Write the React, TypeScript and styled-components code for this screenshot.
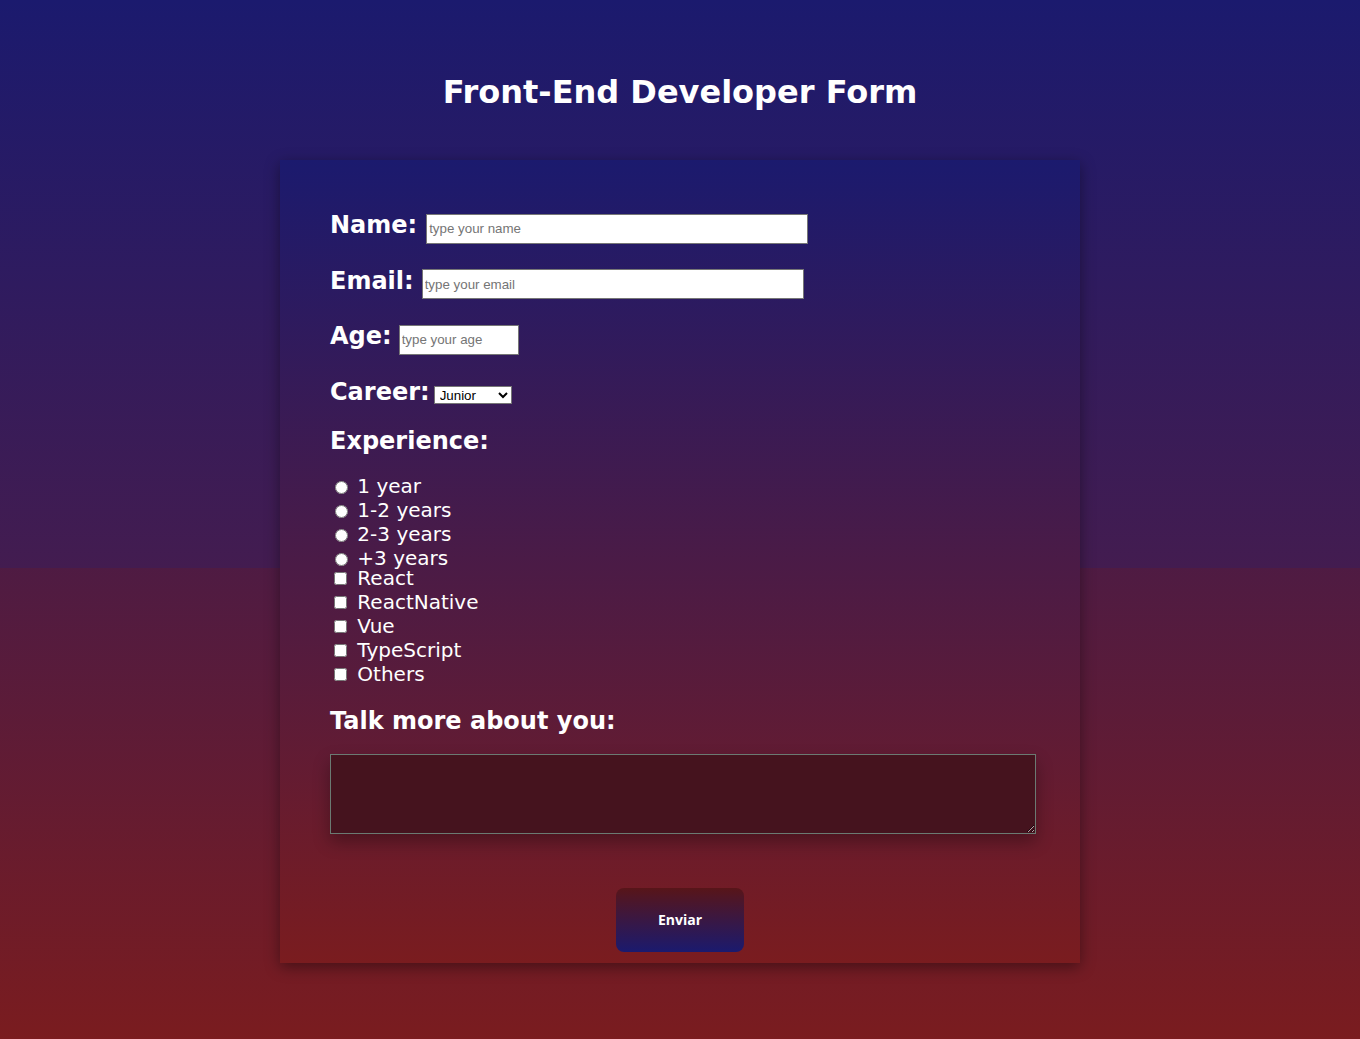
import React from "react";
import styled, { createGlobalStyle } from "styled-components";

const GlobalStyle = createGlobalStyle`
	html {
		min-height: 100%;
		background:
			linear-gradient(to bottom, #1b1a6e 0, #431c50 568px) top / 100% 568px no-repeat,
			linear-gradient(to bottom, #1b1a6e 0, #7a1c1f 100%);
	}

	body {
		margin: 0;
		font-family: "DejaVu Sans", Verdana, sans-serif;
		color: #fff;
	}
`;

const Page = styled.main`
	display: flex;
	flex-direction: column;
	align-items: center;
	padding-bottom: 40px;
`;

const Title = styled.h1`
	margin: 74px 0 49px;
	font-size: 32px;
	line-height: 37px;
	font-weight: bold;
	text-align: center;
`;

const Form = styled.form`
	box-sizing: border-box;
	width: 800px;
	display: flex;
	flex-direction: column;
	gap: 21px;
	padding: 51px 50px 11px;
	background: linear-gradient(to bottom, #1b1a6e, #7a1c1f);
	box-shadow: 0 4px 14px rgba(0, 0, 0, 0.4);
`;

const Fields = styled.div`
	display: flex;
	flex-direction: column;
	gap: 23px;
`;

const Field = styled.div`
	display: flex;
	align-items: baseline;
`;

const Label = styled.label<{ $space?: number }>`
	margin-right: ${(p) => p.$space ?? 9}px;
	font-size: 24px;
	font-weight: bold;
`;

const Heading = styled.h3`
	margin: 0;
	font-size: 24px;
	font-weight: bold;
`;

const TextInput = styled.input<{ $width: number }>`
	box-sizing: border-box;
	width: ${(p) => p.$width}px;
	height: 30px;
	padding: 1px 2px;
	border: 1px solid #767676;
	font-family: "Liberation Sans", Arial, sans-serif;
	font-size: 13.33px;

	&::placeholder {
		color: #757575;
	}
`;

const Select = styled.select`
	box-sizing: border-box;
	width: 78px;
	height: 18px;
	padding: 0 0 0 1px;
	border: 1px solid #767676;
	border-radius: 0;
	background: #fff;
	font-family: "Liberation Sans", Arial, sans-serif;
	font-size: 13.33px;
	color: #000;
`;

const Options = styled.div`
	display: flex;
	flex-direction: column;
	margin-top: -2px;
`;

const OptionGroup = styled.div<{ $overlap?: number }>`
	display: flex;
	flex-direction: column;
	margin-top: ${(p) => (p.$overlap ? -p.$overlap : 0)}px;
`;

const Option = styled.label`
	display: flex;
	align-items: center;
	height: 24px;
	font-size: 20px;
	line-height: 24px;
	white-space: pre;

	input {
		width: 13px;
		height: 13px;
		margin: 3px 3px 0 5px;
	}

	input[type="checkbox"] {
		margin: 2px 4px 0 4px;
	}
`;

const TextArea = styled.textarea`
	width: 700px;
	height: 74px;
	margin-top: -2px;
	padding: 2px;
	border: 1px solid #6b7a72;
	background: #45131e;
	color: #fff;
	font-family: "DejaVu Sans", sans-serif;
	box-shadow: 0 8px 16px rgba(0, 0, 0, 0.3);
`;

const Button = styled.button`
	align-self: center;
	width: 128px;
	height: 64px;
	margin-top: 33px;
	border: none;
	border-radius: 8px;
	background: linear-gradient(to bottom, #581519, #1b1a6e);
	color: #fff;
	font-family: "Open Sans", "Noto Sans", sans-serif;
	font-size: 14px;
	font-weight: bold;
	cursor: pointer;
`;

const experience = ["1 year", "1-2 years", "2-3 years", "+3 years"];
const stack = ["React", "ReactNative", "Vue", "TypeScript", "Others"];

export default function App() {
	return (
		<>
			<GlobalStyle/>
			<Page>
				<Title>Front-End Developer Form</Title>
				<Form onSubmit={(e) => e.preventDefault()}>
					<Fields>
						<Field>
							<Label htmlFor="name">Name:</Label>
							<TextInput id="name" $width={382} placeholder="type your name"/>
						</Field>
						<Field>
							<Label htmlFor="email" $space={8}>Email:</Label>
							<TextInput id="email" type="email" $width={382} placeholder="type your email"/>
						</Field>
						<Field>
							<Label htmlFor="age" $space={7}>Age:</Label>
							<TextInput id="age" $width={120} placeholder="type your age"/>
						</Field>
						<Field>
							<Label htmlFor="career" $space={4}>Career:</Label>
							<Select id="career" defaultValue="junior">
								<option value="junior">Junior</option>
								<option value="pleno">Pleno</option>
								<option value="senior">Senior</option>
							</Select>
						</Field>
					</Fields>
					<Heading>Experience:</Heading>
					<Options>
						<OptionGroup>
							{experience.map((item) => (
								<Option key={item}>
									<input type="radio" name="experience" value={item}/>{" " + item}
								</Option>
							))}
						</OptionGroup>
						<OptionGroup $overlap={4}>
							{stack.map((item) => (
								<Option key={item}>
									<input type="checkbox" value={item}/>{" " + item}
								</Option>
							))}
						</OptionGroup>
					</Options>
					<Heading>Talk more about you:</Heading>
					<TextArea/>
					<Button type="submit">Enviar</Button>
				</Form>
			</Page>
		</>
	);
}
